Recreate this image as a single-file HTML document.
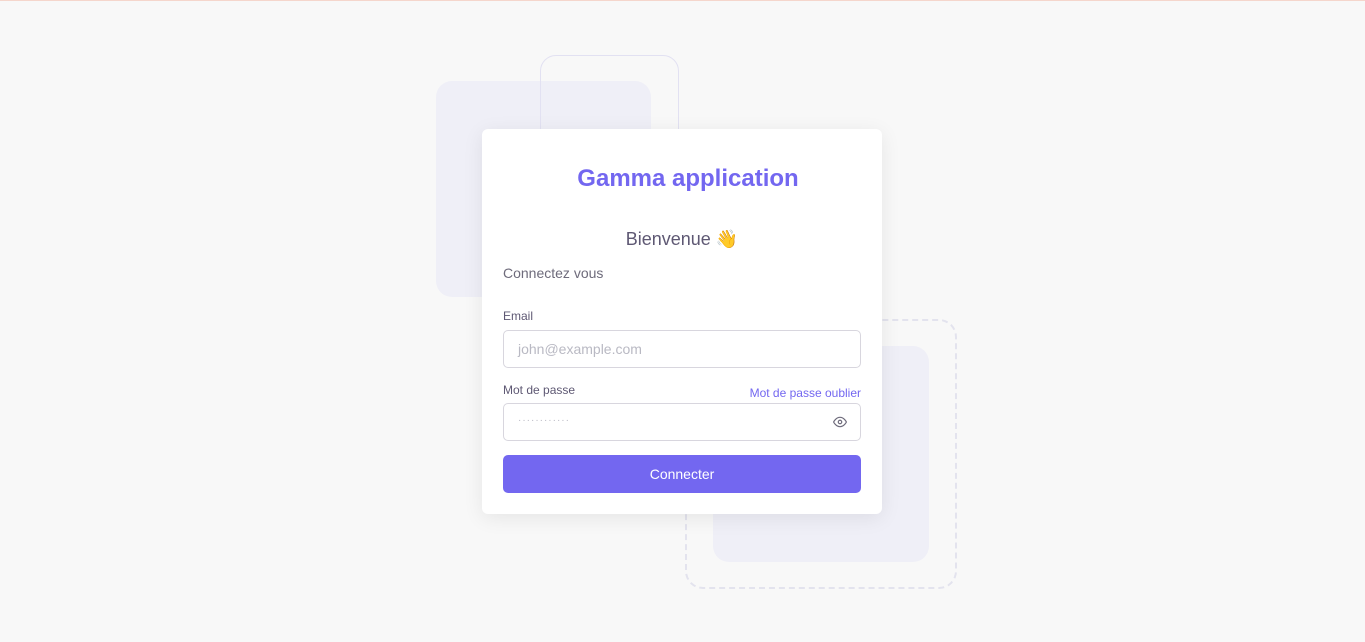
<!DOCTYPE html>
<html><head><meta charset="utf-8"><style>
*{box-sizing:border-box;margin:0;padding:0}
body{width:1365px;height:642px;background:#f8f8f8;font-family:"Liberation Sans",sans-serif;position:relative;overflow:hidden}
.a{position:absolute}
</style></head><body>
<div class="a" style="left:0;top:0;width:1365px;height:1px;background:#f5d6cc"></div>
<div class="a" style="left:436px;top:81px;width:215px;height:216px;background:#efeff7;border-radius:16px"></div>
<div class="a" style="left:540px;top:55px;width:139px;height:140px;border:1.5px solid #e2e1f2;border-radius:16px"></div>
<div class="a" style="left:713px;top:346px;width:216px;height:216px;background:#efeff7;border-radius:16px"></div>
<div class="a" style="left:685px;top:319px;width:272px;height:270px;border:2px dashed #e3e3ee;border-radius:18px"></div>
<div class="a" style="left:482px;top:129px;width:400px;height:385px;background:#fff;border-radius:6px;box-shadow:0 4px 20px rgba(0,0,0,.08)">
<div class="a" style="left:6px;top:36px;width:400px;text-align:center;font-size:24px;font-weight:bold;color:#7367f0">Gamma application</div>
<div class="a" style="left:0;top:100px;width:400px;text-align:center;font-size:18px;color:#5e5873">Bienvenue <span style="font-size:18px">👋</span></div>
<div class="a" style="left:21px;top:136px;font-size:14px;color:#6e6b7b">Connectez vous</div>
<div class="a" style="left:21px;top:180px;font-size:12px;color:#5e5873">Email</div>
<div class="a" style="left:21px;top:201px;width:358px;height:38px;border:1px solid #d8d6de;border-radius:5px;padding:10px 14px;font-size:14px;color:#b9b9c3">john@example.com</div>
<div class="a" style="left:21px;top:254px;font-size:12px;color:#5e5873">Mot de passe</div>
<div class="a" style="right:21px;top:257px;font-size:12px;color:#7367f0">Mot de passe oublier</div>
<div class="a" style="left:21px;top:274px;width:358px;height:38px;border:1px solid #d8d6de;border-radius:5px;padding:11px 14px;font-size:10px;color:#b9b9c3;letter-spacing:1px">············
<svg class="a" style="right:13px;top:12px" width="14" height="12" viewBox="0 0 24 20" fill="none" stroke="#6e6b7b" stroke-width="2"><path d="M1 10s4-8 11-8 11 8 11 8-4 8-11 8S1 10 1 10z"/><circle cx="12" cy="10" r="3"/></svg></div>
<div class="a" style="left:21px;top:326px;width:358px;height:38px;background:#7367f0;border-radius:5px;color:#fff;font-size:14px;text-align:center;line-height:38px">Connecter</div>
</div>
</body></html>
